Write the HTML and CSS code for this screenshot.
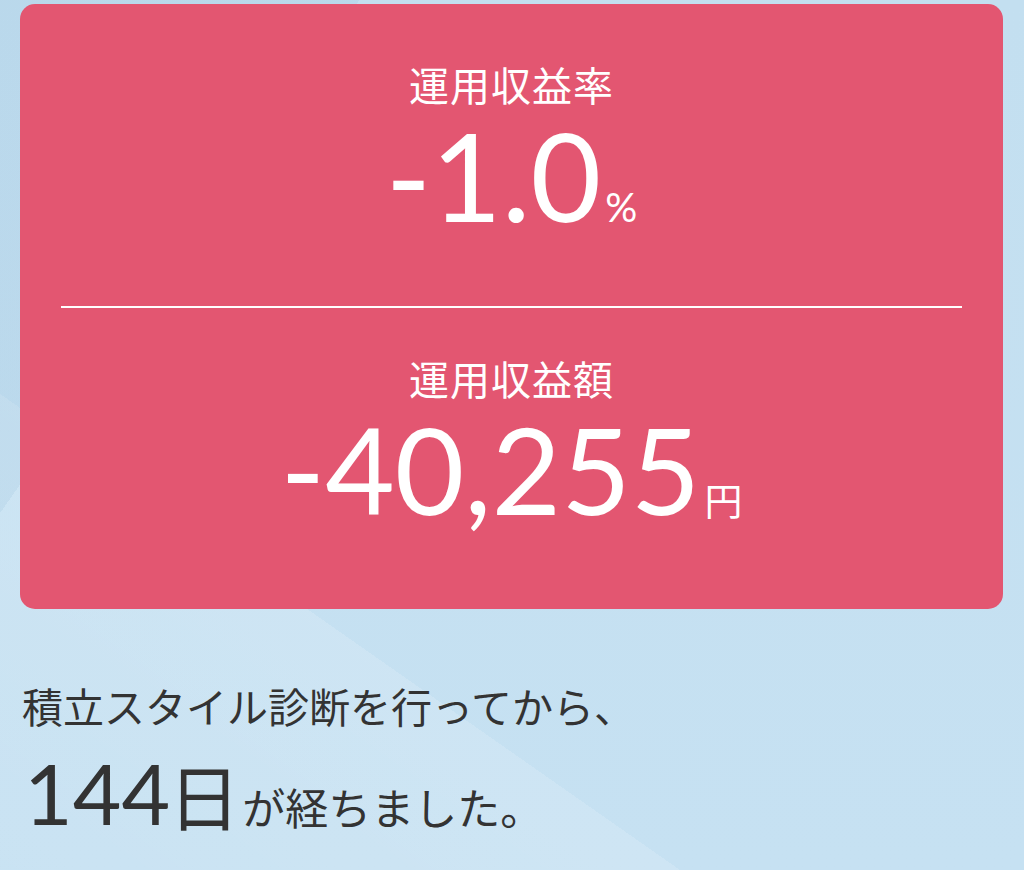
FILE: index.html
```html
<!DOCTYPE html>
<html lang="ja">
<head>
    <meta charset="UTF-8">
    <meta name="viewport" content="width=device-width, initial-scale=1.0">
    <title>運用収益</title>
    <link rel="stylesheet" href="styles.css">
</head>
<body>
    <div class="page">
        <div class="card">
            <div class="stat">
                <div class="stat-label">運用収益率</div>
                <div class="stat-value">-1.0<span class="unit">%</span></div>
            </div>
            <hr class="divider">
            <div class="stat amount">
                <div class="stat-label">運用収益額</div>
                <div class="stat-value">-40,255<span class="unit yen">円</span></div>
            </div>
        </div>

        <div class="since">
            <p class="since-text">積立スタイル診断を行ってから、</p>
            <p class="days"><span class="days-num">144</span><span class="days-kanji">日</span><span class="days-rest">が経ちました。</span></p>
        </div>
    </div>
</body>
</html>
```

FILE: styles.css
```css
html, body {
    margin: 0;
    height: 100%;
}
body {
    font-family: "Noto Sans CJK JP", "Noto Sans", sans-serif;
    color: #333;
    background-color: #c4e0f1;
    background-image:
        linear-gradient(125deg, rgba(150, 190, 218, 0.2) 0 22%, transparent 22%),
        linear-gradient(215deg, transparent 70%, rgba(255, 255, 255, 0.15) 70%, rgba(255, 255, 255, 0.06) 100%),
        linear-gradient(180deg, #c3dff0, #c6e1f2);
    overflow: hidden;
}
.page {
    padding: 4px 21px 0 20px;
}
.card {
    background: #e35671;
    border-radius: 15px;
    color: #fff;
    padding: 52px 0 38px;
    height: 515px;
}
.stat {
    text-align: center;
}
.stat-label {
    font-size: 40px;
    line-height: 56px;
    letter-spacing: 1px;
}
.stat-value {
    font-family: Lato, "Noto Sans", sans-serif;
    font-size: 122px;
    line-height: 110px;
    margin-top: 8px;
}
.amount .stat-value {
    font-size: 120px;
    margin-top: 8px;
}
.unit {
    font-size: 40px;
    margin-left: 4px;
}
.unit.yen {
    font-family: "Noto Sans CJK JP", sans-serif;
    font-size: 38px;
    margin-left: 4px;
}
.divider {
    border: 0;
    height: 2px;
    background: #fff;
    margin: 44px 41px 42px;
}
.since {
    padding: 68px 0 0 2px;
}
.since-text {
    margin: 0;
    font-size: 41px;
    line-height: 56px;
}
.days {
    margin: 12px 0 0;
    line-height: 96px;
}
.days-num {
    font-family: Lato, sans-serif;
    font-size: 84px;
    margin-left: 2px;
}
.days-kanji {
    font-size: 72px;
    margin-left: -2px;
}
.days-rest {
    font-size: 43px;
    margin-left: 2px;
}
```
